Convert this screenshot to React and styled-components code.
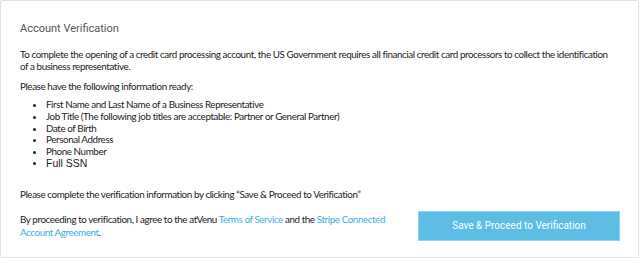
import styled, { createGlobalStyle } from 'styled-components';

const GlobalStyle = createGlobalStyle`
  * { box-sizing: border-box; }
  body {
    margin: 0;
    background: #fff;
    font-family: 'Lato', 'Noto Sans', sans-serif;
  }
`;

const items = [
  'First Name and Last Name of a Business Representative',
  'Job Title (The following job titles are acceptable: Partner or General Partner)',
  'Date of Birth',
  'Personal Address',
  'Phone Number',
];

const App = () => (
  <>
    <GlobalStyle />
    <Card>
      <Title>Account Verification</Title>
      <Text>
        To complete the opening of a credit card processing account, the US Government requires all financial credit
        card processors to collect the identification of a business representative.
      </Text>
      <Text $gap={8}>Please have the following information ready:</Text>
      <List>
        {items.map((item, i) => (
          <li key={i}>{item}</li>
        ))}
        <SsnItem>Full SSN</SsnItem>
      </List>
      <Text>Please complete the verification information by clicking “Save &amp; Proceed to Verification”</Text>
      <Footer>
        <Agreement>
          By proceeding to verification, I agree to the atVenu <a href="#">Terms of Service</a> and the{' '}
          <a href="#">Stripe Connected Account Agreement</a>.
        </Agreement>
        <ProceedButton>Save &amp; Proceed to Verification</ProceedButton>
      </Footer>
    </Card>
  </>
);

const Card = styled.div`
  width: 639px;
  height: 258px;
  border: 1px solid #e2e2e2;
  border-radius: 2px;
  padding: 21px 17px 0 19px;
  color: #222;
`;

const Title = styled.h2`
  margin: 0 0 12px;
  font-family: 'Roboto', 'Liberation Sans', sans-serif;
  font-size: 11px;
  font-weight: 400;
  color: #555;
  line-height: 14px;
`;

const Text = styled.p`
  max-width: 597px;
  margin: ${p => p.$gap || 0}px 0 0;
  font-size: 9.8px;
  letter-spacing: -0.4px;
  line-height: 12px;
`;

const List = styled.ul`
  margin: 7px 0 18px;
  padding-left: 26px;
  font-size: 9.8px;
  letter-spacing: -0.4px;
  line-height: 11.8px;
  li::marker {
    font-size: 10px;
  }
`;

const SsnItem = styled.li`
  font-family: 'Liberation Sans', Arial, sans-serif;
  font-size: 10.5px;
  letter-spacing: 0;
`;

const Footer = styled.div`
  display: flex;
  justify-content: space-between;
  align-items: center;
  margin-top: 11px;
`;

const Agreement = styled.p`
  margin: 0;
  width: 372px;
  font-size: 9.8px;
  letter-spacing: -0.4px;
  line-height: 12.5px;
  a {
    color: #3daee0;
    text-decoration: none;
  }
`;

const ProceedButton = styled.button`
  width: 202px;
  height: 30px;
  margin-right: 1px;
  background: #5cbde6;
  border: 1px solid #8bd3f1;
  color: #fff;
  font-family: 'Roboto', 'Liberation Sans', sans-serif;
  font-size: 10px;
  cursor: pointer;
`;

export default App;
